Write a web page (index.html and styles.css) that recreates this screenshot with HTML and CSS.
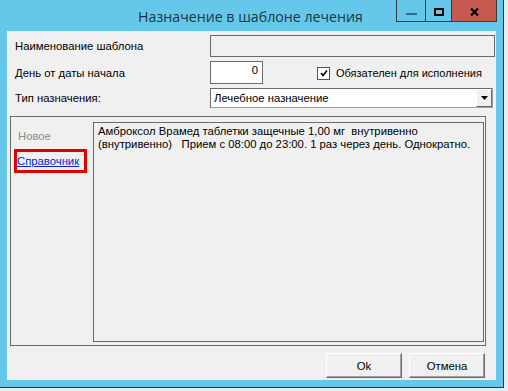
FILE: index.html
```html
<!DOCTYPE html>
<html>
<head>
    <title>Назначение в шаблоне лечения</title>
    <meta charset="UTF-8">
    <link rel="stylesheet" href="styles.css">
</head>
<body>
    <div class="window">
        <div class="titlebar">
            <span class="title">Назначение в шаблоне лечения</span>
            <div class="controls">
                <span class="ctl ctl-min"><i></i></span>
                <span class="ctl ctl-max"><i></i></span>
                <span class="ctl ctl-close">
                    <svg width="9" height="8" viewBox="0 0 9 8"><path d="M1 0.5 L8 7.5 M8 0.5 L1 7.5" stroke="#000" stroke-width="2.2"/></svg>
                </span>
            </div>
        </div>

        <div class="client">
            <div class="row row-name">
                <span class="label">Наименование шаблона</span>
                <div class="field field-disabled"></div>
            </div>

            <div class="row row-day">
                <span class="label">День от даты начала</span>
                <div class="field field-num">0</div>
                <label class="check">
                    <span class="box">
                        <svg width="8" height="8" viewBox="0 0 8 8"><path d="M1 4 L3 6.5 L7 1.5" fill="none" stroke="#000" stroke-width="1.6"/></svg>
                    </span>
                    Обязателен для исполнения
                </label>
            </div>

            <div class="row row-type">
                <span class="label">Тип назначения:</span>
                <div class="select">
                    <span class="select-text">Лечебное назначение</span>
                    <span class="select-btn">
                        <svg width="7" height="4" viewBox="0 0 7 4"><path d="M0 0 H7 L3.5 4 Z" fill="#000"/></svg>
                    </span>
                </div>
            </div>

            <div class="group">
                <div class="side">
                    <span class="side-new">Новое</span>
                    <span class="mark"><a class="side-link" href="#">Справочник</a></span>
                </div>
                <div class="memo">Амброксол Врамед таблетки защечные 1,00 мг&nbsp; внутривенно (внутривенно)&nbsp;&nbsp; Прием с 08:00 до 23:00. 1 раз через день. Однократно.</div>
            </div>

            <div class="buttons">
                <button class="btn">Ok</button>
                <button class="btn">Отмена</button>
            </div>
        </div>
    </div>
</body>
</html>
```

FILE: styles.css
```css
body {
    margin: 0;
    background: #e9ecef;
    font-family: 'Liberation Sans', Arial, sans-serif;
    font-size: 11.3px;
    color: #000;
}
.window {
    width: 504px;
    height: 388px;
    box-sizing: border-box;
    background: #65c8ea;
    border-right: 1px solid #2b3a40;
    border-bottom: 1px solid #2b3a40;
    padding: 0 7px 7px 7px;
    display: flex;
    flex-direction: column;
}
.titlebar {
    height: 31px;
    position: relative;
    display: flex;
    justify-content: center;
}
.title {
    font-family: 'Open Sans', 'Noto Sans', sans-serif;
    font-size: 14.2px;
    color: #1f3440;
    line-height: 33px;
    margin-left: -2px;
}
.controls {
    position: absolute;
    top: 0;
    right: -1px;
    display: flex;
    border: 1px solid #3b3b3b;
    border-top: none;
    height: 21px;
}
.ctl {
    display: flex;
    align-items: center;
    justify-content: center;
}
.ctl-min {
    width: 28px;
    border-right: 1px solid #3b3b3b;
}
.ctl-min i {
    width: 11px;
    height: 2px;
    background: #2f6c86;
    margin-top: 6px;
}
.ctl-max {
    width: 25px;
    border-right: 1px solid #3b3b3b;
}
.ctl-max i {
    width: 6px;
    height: 4px;
    border: 2px solid #000;
    margin-top: 2px;
}
.ctl-close {
    width: 44px;
    background: #c75a50;
}
.ctl-close svg {
    margin-top: 2px;
}
.client {
    flex: 1;
    background: #f0f0f0;
    padding: 4px 0 0 0;
}
.row {
    display: flex;
    align-items: center;
    padding-left: 8px;
}
.label {
    width: 195px;
}
.field {
    box-sizing: border-box;
    border: 1px solid #6b6b6b;
}
.field-disabled {
    width: 285px;
    height: 22px;
    background: #f0f0f0;
}
.row-day {
    margin-top: 4px;
}
.field-num {
    width: 53px;
    height: 23px;
    background: #fff;
    text-align: right;
    padding: 2px 4px 0 0;
}
.check {
    display: flex;
    align-items: center;
    margin-left: 54px;
    margin-top: 1px;
    gap: 6px;
    font-size: 11px;
}
.box {
    width: 11px;
    height: 11px;
    border: 1px solid #555;
    background: #fff;
    display: flex;
    align-items: center;
    justify-content: center;
}
.row-type {
    margin-top: 4px;
}
.select {
    width: 283px;
    height: 20px;
    box-sizing: border-box;
    border: 1px solid #a0a0a0;
    border-top-color: #6b6b6b;
    border-left-color: #6b6b6b;
    background: #fff;
    display: flex;
    align-items: center;
}
.select-text {
    flex: 1;
    padding-left: 3px;
}
.select-btn {
    width: 16px;
    height: 18px;
    box-sizing: border-box;
    background: #f0f0f0;
    border: 1px solid #fff;
    border-right-color: #696969;
    border-bottom-color: #696969;
    display: flex;
    align-items: center;
    justify-content: center;
}
.group {
    margin: 8px 10px 0 3px;
    height: 230px;
    box-sizing: border-box;
    border: 1px solid #6b6b6b;
    display: flex;
    padding: 5px 1px 3px 0;
}
.side {
    width: 79px;
    display: flex;
    flex-direction: column;
    padding: 8px 0 0 3px;
}
.side-new {
    color: #8c8c8c;
    padding-left: 4px;
}
.mark {
    margin-top: 7px;
    width: 67px;
    height: 18px;
    border: 3px solid #e00000;
    display: flex;
    align-items: center;
}
.side-link {
    color: #0026d6;
}
.memo {
    flex: 1;
    border: 1px solid #6b6b6b;
    padding: 2px 4px;
    line-height: 13px;
}
.buttons {
    display: flex;
    justify-content: flex-end;
    gap: 7px;
    margin: 7px 11px 0 0;
}
.btn {
    width: 76px;
    height: 25px;
    font-family: 'Liberation Sans', Arial, sans-serif;
    font-size: 11.3px;
    color: #000;
    background: #f0f0f0;
    border: 1px solid;
    border-color: #fff #696969 #696969 #fff;
    box-shadow: inset -1px -1px 0 #a0a0a0;
}
```
